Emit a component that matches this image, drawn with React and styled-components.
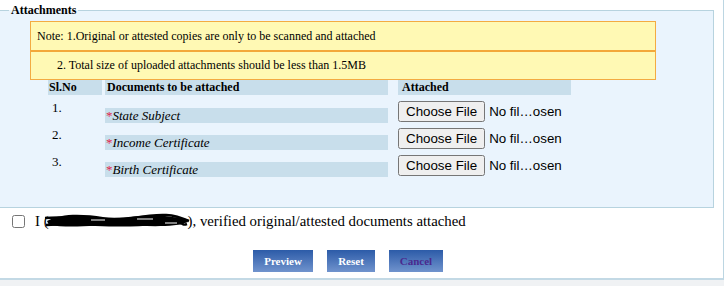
import React from 'react';
import styled, { createGlobalStyle } from 'styled-components';

const GlobalStyle = createGlobalStyle`
  body {
    margin: 0;
    background: #f0f2f4;
    font-family: "Liberation Serif", "Times New Roman", serif;
    color: #000;
  }
`;

const Page = styled.div`
  width: 723px;
  height: 275px;
  padding-top: 3px;
  background: #fff;
  border-right: 1px solid #bcd6e2;
  border-bottom: 2px solid #c3d9e5;
`;

const FieldSet = styled.fieldset`
  margin: 0;
  width: 714px;
  box-sizing: border-box;
  padding: 4px 0 28px 0;
  border: 1px solid #b7d3df;
  border-left: none;
  background: #eaf4fd;
  min-width: 0;
`;

const Legend = styled.legend`
  margin-left: 9px;
  padding: 0 2px;
  font-size: 12px;
  line-height: 14px;
  font-weight: bold;
`;

const NoteBox = styled.div`
  margin-left: 30px;
  width: 626px;
  box-sizing: border-box;
  border: 1px solid #f3ab42;
  background: #fff9b4;
`;

const NoteRow = styled.div`
  height: ${(p) => p.$h}px;
  display: flex;
  align-items: center;
  padding-left: ${(p) => p.$indent}px;
  font-size: 12px;
  border-top: ${(p) => (p.$divider ? '2px solid #f3a83a' : 'none')};
`;

const Grid = styled.div`
  display: grid;
  grid-template-columns: 54px 283px 180px;
  column-gap: 3px;
  margin-left: 48px;
  height: ${(p) => p.$h}px;
`;

const HeadCell = styled.div`
  background: #c8deeb;
  font-size: 12px;
  font-weight: bold;
  line-height: 15px;
  padding-left: ${(p) => p.$pad || 1}px;
  margin-left: ${(p) => p.$shift || 0}px;
`;

const Body = styled.div`
  padding-top: 3px;
`;

const NumCell = styled.div`
  font-size: 13px;
  line-height: 14px;
  padding: 3px 0 0 4px;
`;

const DocCell = styled.div`
  align-self: start;
  margin-top: 10px;
  height: 15px;
  background: #c8deeb;
  font-size: 13px;
  line-height: 16px;
  font-style: italic;
  padding-left: 1px;
`;

const Star = styled.span`
  color: #e0284a;
  font-style: normal;
`;

const FileCell = styled.div`
  margin-left: 7px;
  padding-top: 3px;
`;

const FileInput = styled.input`
  width: 166px;
  font-family: "Liberation Sans", Arial, sans-serif;
  font-size: 13.33px;
  color: #000;
`;

const ConfirmRow = styled.label`
  display: flex;
  align-items: center;
  height: 24px;
  margin-top: 1px;
  font-size: 14.8px;
  padding-left: 8px;
`;

const Check = styled.input`
  margin: 0 10px 0 4px;
  width: 13px;
  height: 13px;
`;

const Redacted = styled.svg`
  width: 148px;
  height: 18px;
  margin: 0 -3px 0 -6px;
`;

const Actions = styled.div`
  display: flex;
  gap: 14px;
  padding: 17px 0 0 253px;
`;

const Button = styled.button`
  width: ${(p) => p.$w}px;
  height: 22px;
  border: none;
  padding: 0;
  background: linear-gradient(#2c5ba8, #7093cd);
  color: ${(p) => (p.$muted ? '#4a2a8e' : '#fff')};
  font-family: "Liberation Serif", "Times New Roman", serif;
  font-size: 11px;
  font-weight: bold;
`;

const docs = ['State Subject', 'Income Certificate', 'Birth Certificate'];

export default function App() {
  return (
    <>
      <GlobalStyle />
      <Page>
        <FieldSet>
          <Legend>Attachments</Legend>
          <NoteBox>
            <NoteRow $h={28} $indent={6}>
              Note: 1.Original or attested copies are only to be scanned and attached
            </NoteRow>
            <NoteRow $h={27} $indent={26} $divider>
              2. Total size of uploaded attachments should be less than 1.5MB
            </NoteRow>
          </NoteBox>
          <Grid $h={15}>
            <HeadCell>Sl.No</HeadCell>
            <HeadCell $pad={2}>Documents to be attached</HeadCell>
            <HeadCell $shift={7} $pad={4}>Attached</HeadCell>
          </Grid>
          <Body>
            {docs.map((d, i) => (
              <Grid $h={27} key={d}>
                <NumCell>{i + 1}.</NumCell>
                <DocCell>
                  <Star>*</Star>
                  {d}
                </DocCell>
                <FileCell>
                  <FileInput type="file" />
                </FileCell>
              </Grid>
            ))}
          </Body>
        </FieldSet>
        <ConfirmRow>
          <Check type="checkbox" />
          I (
          <Redacted viewBox="0 0 148 18">
            <path
              d="M4 9 C18 1 40 2 60 5 S100 1 122 4 S142 5 145 10 C132 16 100 14 80 13 S30 17 6 13 Z"
              fill="#000"
            />
            <path
              d="M2 6 C30 3 60 11 90 6 S130 2 146 9 M3 13 C40 10 70 16 110 12 S136 15 144 12"
              stroke="#000"
              strokeWidth="2.5"
              fill="none"
            />
            <path d="M48 8 L62 8 M94 7 L110 7 M122 11 L134 11" stroke="#fff" strokeWidth="1" />
          </Redacted>
          ), verified original/attested documents attached
        </ConfirmRow>
        <Actions>
          <Button $w={60}>Preview</Button>
          <Button $w={48}>Reset</Button>
          <Button $w={54} $muted>Cancel</Button>
        </Actions>
      </Page>
    </>
  );
}
